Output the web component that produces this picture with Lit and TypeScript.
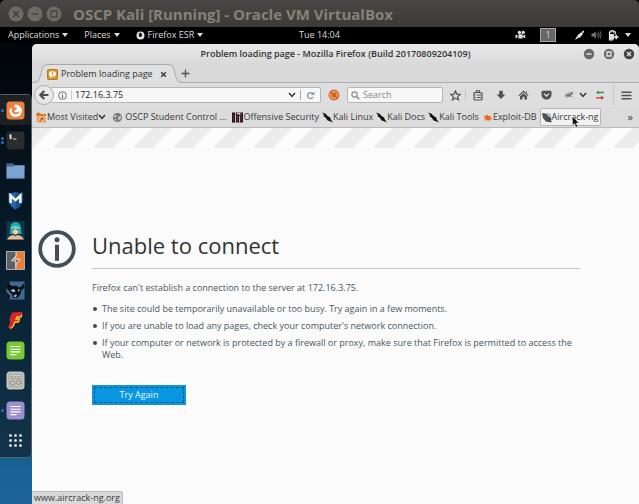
import { LitElement, html, css, svg } from "lit";
import { customElement } from "lit/decorators.js";

const caret = html`<svg class="caret" viewBox="0 0 6 4" width="6" height="4"><path d="M0 0H6L3 4Z" fill="currentColor" /></svg>`;
const chevron = html`<svg viewBox="0 0 8 6" width="8" height="6"><path d="M1 1L4 4.4L7 1" fill="none" stroke="#333" stroke-width="1.5" /></svg>`;

const folder = svg`<path d="M.5 .8H4L5 2H10V4H.5Z" fill="#d97321"/><path d="M.5 3.4H9L10 10.5H1Z" fill="#f19a4c"/><path d="M2.5 5L7 9M3 9L5 5L8 6.5" stroke="#fbe2c8" stroke-width="1"/>`;
const globe = svg`<circle cx="5.5" cy="5.5" r="4.5" fill="#777"/><path d="M2 3.4L5 3L4 5.2L2 5.4ZM6 5L9 3.5L8.6 7L6.5 8.6ZM2.5 7L4.5 7L5 9.2Z" fill="#cdcdcd"/>`;
const offsec = svg`<rect width="11" height="10" y=".5" fill="#201617"/><path d="M3.6 .5V10.5M7.6 4V10.5" stroke="#e6dcdc" stroke-width=".9"/><path d="M1.5 3V9M5.6 3V10M9.6 2V9" stroke="#8c3030" stroke-width=".8"/><path d="M5 .8H8.4V3H7L6.4 2H5Z" fill="#d7cccc"/>`;
const kali = svg`<path d="M0 .4L3.6 1.8L5.6 4L8.2 5.4L8.8 7.4L11 10.6L7.4 9L5.6 8.4L3.6 5.6L1.7 4.4L2 3Z" fill="#111"/>`;
const exploit = svg`<path d="M1 3L3 4.2L5 2.4L6.4 4L8.6 3.8L9 6L10.5 7.4L8.4 7.5L7.6 9L6.2 8.2L3 8.4L3.6 7L1.4 6.2L3 5.5Z" fill="#ef6a21"/>`;
const aircrack = svg`<path d="M0 1L5 2L9 6L9.4 10.5L4 9.6L1 6Z" fill="#3d4440"/><path d="M3 1L8 1.5L10 6.5L6.5 5Z" fill="#9eb0c6"/><path d="M1 2L8 9M1.5 4.5L6 9.5" stroke="#6c786f" stroke-width=".7"/>`;

const bookmarks = [
  { label: "OSCP Student Control …", icon: globe, cls: "spaced" },
  { label: "Offensive Security", icon: offsec, cls: "" },
  { label: "Kali Linux", icon: kali, cls: "" },
  { label: "Kali Docs", icon: kali, cls: "" },
  { label: "Kali Tools", icon: kali, cls: "" },
  { label: "Exploit-DB", icon: exploit, cls: "" },
];

const tile = (fill: string) => svg`<rect x=".5" y=".5" width="18" height="18" rx="3.5" fill=${fill}/>`;
const note = svg`<path d="M4.5 5.5H14.5M4.5 8.2H14.5M4.5 10.9H14.5M4.5 13.6H10.5" stroke="#fff" stroke-width="1.1"/>`;

const dock = [
  { name: "Firefox ESR", dots: 1, active: true, art: svg`${tile("#ee8040")}<circle cx="9.7" cy="9.8" r="6.2" fill="#fff"/><path d="M9.4 3.4C7 4.8 9 7.2 11.6 7.2C10.8 9.2 9 8.6 8.2 9.9C9.2 12 12 11.6 13.4 9.7C13.8 13 9.5 14.6 6.6 12C5.2 10.5 5.4 8 6.2 6.6C4.5 7 3.4 9 3.5 10.5V4L7 2.5Z" fill="#ee8040"/>` },
  { name: "Terminal", dots: 2, art: svg`${tile("#2b2c2d")}<path d="M5.5 4.2H3.8V5.7H5.3V7.3H3.4M4.6 3.2V8.2M7 8H10.5" fill="none" stroke="#eee" stroke-width=".9"/>` },
  { name: "Files", dots: 0, art: svg`<path d="M.5 2.2H7L8.5 4H18.5V9H.5Z" fill="#3f668f"/><path d="M.5 5.6H7.5L9 4.6H18.5V17.4H.5Z" fill="#7ba4d3"/><path d="M.5 17H18.5" stroke="#5b86b8"/>` },
  { name: "Metasploit", dots: 0, art: svg`<path d="M2.5 1.5Q6 2.8 9.5 1Q13 2.8 16.5 1.5V10Q15.5 15 9.5 18.5Q3.5 15 2.5 10Z" fill="#2869ad"/><path d="M9.5 1Q13 2.8 16.5 1.5V10Q15.5 15 9.5 18.5Z" fill="#1d508a"/><path d="M4.6 12V4.6L9.5 9.2L14.4 4.6V12" fill="none" stroke="#fff" stroke-width="2.4"/>` },
  { name: "Armitage", dots: 0, art: svg`<rect x=".5" y=".5" width="18" height="18" fill="#0e3a49"/><path d="M4 13L4.5 5Q6 1 9.5 1Q13 1 14.5 5L15.5 13Z" fill="#27a9a7"/><path d="M6.5 7H12.5L12 12L9.5 14L7 12Z" fill="#f2cba7"/><path d="M5 6.5Q9 3 14 6.5L14 8H5Z" fill="#67d7cd"/><path d="M1 18.5Q3 14.4 8 14L9.5 15.5L11 14Q16 14.4 18 18.5Z" fill="#e9bc96"/><path d="M6.5 8.5H8.5M10.5 8.5H12.5" stroke="#26505a"/>` },
  { name: "Burp Suite", dots: 0, art: svg`<rect x=".5" y=".5" width="18" height="18" fill="#5e6064"/><path d="M10 1H18V18H10V13.8L14 8.2H8.4L10 5Z" fill="#ed7c34"/><path d="M10 5L5 9.6H9.8V13.8Z" fill="#5e6064"/><path d="M10 1V5L5.6 9.8H9.8V18" fill="none" stroke="#eee" stroke-width="1"/><path d="M10 5L8.4 8.2H14L9.8 13.8" fill="none" stroke="#eee" stroke-width="1"/><rect x=".5" y=".5" width="18" height="18" fill="none" stroke="#c9c9c9" stroke-width=".8"/>` },
  { name: "Maltego", dots: 0, art: svg`<rect x=".5" y=".5" width="18" height="18" fill="#436b91"/><path d="M.5 .5H4L3 3L6 5L10 4.4L13 6.5L16 5L17.5 2L18.5 7L15.5 9L14.5 13L11.5 17H7L6.5 14L3 10L.5 7Z" fill="#0a1018"/><path d="M4.5 9.5L8 8L9.5 10.5L7 11ZM12 8L14 9L12.4 11ZM8 14.6L10 13.4L11 15L8.6 16.4Z" fill="#b4cddd"/><path d="M.5 11L4 15L3.4 18.5H.5Z" fill="#0a1018"/>` },
  { name: "Faraday", dots: 0, art: svg`<path d="M6 1.5L16.5 1L15 6L10.5 6.5L14 7.5L12.5 11L9 11.5L7.5 15L5 18L2 16.5L4 12L3.5 8Z" fill="#d9252b"/><path d="M16 3.5L15 6H11L10 8H13.5L12.5 11H8.8L7.3 15.2L4.5 17.5" fill="none" stroke="#f4cb3a" stroke-width="1.3"/>` },
  { name: "Leafpad", dots: 0, art: svg`${tile("#78c936")}${note}` },
  { name: "Tweak Tool", dots: 0, art: svg`${tile("#c8c8c0")}<rect x="3" y="3" width="13" height="13" fill="none" stroke="#9a9a94" stroke-width=".8"/><circle cx="6.8" cy="12" r="2.3" fill="none" stroke="#85857f"/><circle cx="12.6" cy="11.4" r="2.1" fill="none" stroke="#85857f"/><path d="M4.5 5.5H7M8.5 5.5H10.5M12 5.5H14.5M4.5 7.6H14.5" stroke="#999992"/>` },
  { name: "Notes", dots: 1, art: svg`${tile("#9c8fd0")}${note}` },
  { name: "Show Applications", dots: 0, art: svg`${[4.5, 9.5, 14.5].map((y) => [4.5, 9.5, 14.5].map((x) => svg`<rect x=${x - 1.3} y=${y - 1.3} width="2.6" height="2.6" rx=".8" fill="#edf1f3"/>`))}` },
];

@customElement("app-root")
export class AppRoot extends LitElement {
  static styles = css`
    :host {
      display: flex;
      flex-direction: column;
      min-height: 100vh;
      background: #000;
      font: 9px/14px "Open Sans", "Noto Sans", sans-serif;
      color: #3a3a3a;
    }
    * { box-sizing: border-box; }
    svg { display: block; flex: none; }
    button, input {
      font: inherit;
      color: inherit;
      border: 0;
      padding: 0;
      margin: 0;
      background: none;
      outline: none;
    }
    button { display: flex; align-items: center; justify-content: center; }
    a { color: inherit; text-decoration: none; }

    .host-bar {
      display: flex;
      align-items: center;
      height: 27px;
      padding: 0 8px;
      gap: 3px;
      border-radius: 5px 5px 0 0;
      background: linear-gradient(#484743, #3b3a36);
      color: #858277;
    }
    .host-title {
      margin-left: 8px;
      font-size: 15px;
      line-height: 24px;
      font-weight: 700;
      white-space: nowrap;
    }

    .panel {
      display: grid;
      grid-template-columns: 1fr auto 1fr;
      align-items: center;
      height: 16px;
      padding: 0 8px;
      background: #000;
      color: #dcdcdc;
    }
    .menus, .tray { display: flex; align-items: center; }
    .menus { gap: 16px; }
    .menus button { gap: 3px; }
    .tray { justify-content: flex-end; gap: 6px; }
    .workspace {
      width: 16px;
      height: 14px;
      margin: 0 12px 0 8px;
      border: 1px solid #a8a8a8;
      background: #666;
    }

    .desktop {
      flex: 1;
      display: grid;
      grid-template-columns: 32px minmax(0, 1fr);
      background: linear-gradient(#020509, #010a14 18%, #07293f 50%, #0e3f60 78%, #1a6396 92%, #1b6498);
      padding-top: 1px;
    }
    .dock {
      display: flex;
      flex-direction: column;
      align-self: start;
      margin-top: 50px;
      border: 1px solid #53616b;
      border-left: 0;
      border-radius: 0 5px 5px 0;
      background: linear-gradient(#060c12, #061b2a 40%, #12344b);
      padding-bottom: 2px;
    }
    .launcher {
      position: relative;
      width: 31px;
      height: 30px;
    }
    .launcher.active { background: #1c2125; border-radius: 3px; }
    .dots {
      position: absolute;
      left: 1px;
      top: 9px;
      height: 12px;
      display: flex;
      flex-direction: column;
      justify-content: center;
      gap: 1px;
    }
    .dot { width: 3px; height: 3px; border-radius: 50%; background: #2a6fc0; }

    .window {
      position: relative;
      display: flex;
      flex-direction: column;
      border-radius: 5px 5px 0 0;
      overflow: hidden;
      background: #d9d9d9;
    }
    .caption {
      display: grid;
      grid-template-columns: 1fr auto 1fr;
      align-items: center;
      height: 19px;
      padding: 0 4px;
      background: linear-gradient(#e9e9e9, #dadada);
      color: #333;
    }
    .caption-title { grid-column: 2; font-weight: 600; white-space: nowrap; }
    .controls { display: flex; justify-content: flex-end; gap: 8px; }

    .tabs {
      display: flex;
      align-items: flex-end;
      height: 20px;
      padding-left: 3px;
      background: linear-gradient(#d9d9d9 18px, #d6d6d6);
      box-shadow: inset 0 -1px #aaaeb2;
    }
    .tab { display: flex; color: #333; }
    .tab-body {
      display: flex;
      align-items: center;
      height: 19px;
      width: 122px;
      padding: 0 2px 0 0;
      border-top: 1px solid #a5a9ad;
      background: #e0e0e0;
    }
    .tab-title { flex: 1; padding-left: 3px; white-space: nowrap; }
    .new-tab { width: 9px; height: 19px; }

    .nav {
      display: flex;
      align-items: center;
      height: 24px;
      padding-left: 2px;
      background: #dedede;
    }
    .back {
      position: relative;
      z-index: 1;
      width: 20px;
      height: 20px;
      border: 1px solid #adadad;
      border-radius: 50%;
      background: #e8e8e8;
    }
    .field {
      display: flex;
      align-items: center;
      height: 16px;
      border: 1px solid #b5b5b5;
      border-radius: 2px;
      background: #f7f7f7;
    }
    .field input { flex: 1; min-width: 0; height: 14px; }
    .url { flex: 1; margin-left: -4px; padding: 0 1px 0 7px; gap: 4px; }
    .url input { height: 10px; border-left: 1px solid #cacaca; padding-left: 3px; color: #222; }
    .reload { width: 19px; height: 10px; border-left: 1px solid #aaa; }
    .stop { width: 26px; }
    .search { width: 96px; padding: 0 3px; gap: 3px; }
    .search input::placeholder { color: #888; opacity: 1; }
    .tool { width: 23px; height: 20px; }
    .tool.divided { height: 12px; padding-left: 3px; border-right: 1px solid #c5c5c5; }
    .tool.narrow { width: 21px; }
    .tool.slim { width: 8px; }
    .tool.wide { width: 26px; }
    .tool.menu { border-left: 1px solid #c5c5c5; }

    .bookmarks {
      display: flex;
      align-items: center;
      height: 21px;
      padding: 0 6px 0 4px;
      gap: 3px;
      border-bottom: 1px solid #b9b9b9;
      background: #dcdcdc;
      white-space: nowrap;
    }
    .bookmark { display: flex; align-items: center; }
    .bookmark.spaced { gap: 2px; margin: 0 3px; }
    .bookmark.hover {
      position: relative;
      height: 18px;
      padding: 0 1px;
      border: 1px solid #b4b4b4;
      border-radius: 2px;
      background: #f2f2f2;
    }
    .cursor { position: absolute; left: 31px; top: 7px; }
    .overflow { margin-left: auto; font-size: 11px; }

    .page { flex: 1; background: #fbfbfb; color: #4a5661; }
    .stripes {
      height: 20px;
      background: linear-gradient(135deg, #ececec 25%, #fcfcfc 25% 50%, #ececec 50% 75%, #fcfcfc 75%) 1px 0 / 40px 40px;
    }
    .error {
      display: flex;
      align-items: flex-start;
      gap: 16px;
      max-width: 554px;
      padding: 82px 6px 16px;
    }
    .message { flex: 1; }
    h1 {
      margin: 0 0 12px;
      padding-bottom: 8px;
      border-bottom: 1px solid #c8c8c8;
      color: #333;
      font-size: 22px;
      line-height: 30px;
      font-weight: 400;
    }
    p { margin: 0 0 7px; }
    ul { list-style: none; margin: 0 0 20px; padding: 0; }
    li { position: relative; padding: 1px 0 4px 10px; line-height: 12px; }
    li::before {
      content: "";
      position: absolute;
      left: 1px;
      top: 5px;
      width: 4px;
      height: 4px;
      border-radius: 50%;
      background: #3f4a55;
    }
    .retry {
      width: 94px;
      height: 20px;
      padding: 2px;
      background: #0996e0;
      color: #e8f6ff;
    }
    .retry span { flex: 1; height: 16px; line-height: 14px; border: 1px dashed #0b567e; }
    .status {
      position: absolute;
      left: 0;
      bottom: 0;
      padding: 0 2px;
      border: 1px solid #bbb;
      border-width: 1px 1px 0 0;
      border-radius: 0 3px 0 0;
      background: #d9d9d9;
      line-height: 12px;
    }
  `;

  render() {
    const hostButtons = ["M5 5L11 11M11 5L5 11", "M4.5 8H11.5", "M5 5H11V11H5Z"];
    const names = ["Close", "Minimize", "Maximize"];
    return html`
      <header class="host-bar">
        ${hostButtons.map((d, i) => html`<button aria-label=${names[i]}>
          <svg width="16" height="16" viewBox="0 0 16 16"><circle cx="8" cy="8" r="7.5" fill="#6d6b63" /><path d=${d} fill="none" stroke="#3a3935" stroke-width="1.1" /></svg>
        </button>`)}
        <span class="host-title">OSCP Kali [Running] - Oracle VM VirtualBox</span>
      </header>

      <nav class="panel">
        <div class="menus">
          <button>Applications ${caret}</button>
          <button>Places ${caret}</button>
          <button>
            <svg width="9" height="9" viewBox="0 0 9 9"><circle cx="4.5" cy="4.5" r="4" fill="#e0e0e0" /><path d="M4.2 1.4L6 3L5.8 5.4L4 6L2.8 5V3Z" fill="#080808" /></svg>
            Firefox ESR ${caret}
          </button>
        </div>
        <time>Tue 14:04</time>
        <div class="tray">
          <svg width="11" height="10" viewBox="0 0 11 10"><circle cx="4.4" cy="2.4" r="1.7" fill="#ddd" /><circle cx="8.2" cy="2.4" r="1.7" fill="#ddd" /><path d="M3.4 4.2H7.6V8.6H3.4ZM7.6 6L10.2 4.4V8.2L7.6 7ZM.5 4.5L2.6 5.6V7.2L.5 8.5Z" fill="#ddd" /></svg>
          <button class="workspace">1</button>
          <svg width="11" height="11" viewBox="0 0 11 11"><path d="M1 10L3 6L5 7.5ZM3.2 5.5L5.5 8L9 4L7.2 2.2ZM7.5 2L9.5 .5L10.2 1.3L9 3.5Z" fill="#e8e8e8" /></svg>
          <svg width="11" height="10" viewBox="0 0 11 10"><path d="M.5 3.5H2.5L4.8 1.5V8.5L2.5 6.5H.5Z" fill="#777" /><path d="M6 3.4Q7 5 6 6.6M7.4 2.2Q9.2 5 7.4 7.8M9 1Q11.4 5 9 9" fill="none" stroke="#666" /></svg>
          <svg width="11" height="11" viewBox="0 0 11 11"><path d="M1.5 1.8H3V.8H5.5V1.8H7.2V4.5M5 9.8H1.5V1.8" fill="none" stroke="#eee" stroke-width="1.2" /><path d="M2 4H6V9.5H2Z" fill="#ddd" /><path d="M5.8 7H10.5M8.2 4.8V9.2" stroke="#eee" stroke-width="1.4" /></svg>
          ${caret}
        </div>
      </nav>

      <main class="desktop">
        <aside class="dock">
          ${dock.map((d) => html`<button class="launcher ${d.active ? "active" : ""}" aria-label=${d.name}>
            <span class="dots">${Array.from({ length: d.dots }, () => html`<i class="dot"></i>`)}</span>
            <svg width="19" height="19" viewBox="0 0 19 19">${d.art}</svg>
          </button>`)}
        </aside>

        <section class="window">
          <div class="caption">
            <span class="caption-title">Problem loading page - Mozilla Firefox (Build 20170809204109)</span>
            <div class="controls">
              ${["M3.5 6H8.5", "M4 4H8V8H4Z", "M4 4L8 8M8 4L4 8"].map((d, i) => html`<button aria-label=${["Minimize window", "Restore window", "Close window"][i]}>
                <svg width="12" height="12" viewBox="0 0 12 12"><circle cx="6" cy="6" r="5.2" fill=${i === 2 ? "#444" : "#696969"} /><path d=${d} fill="none" stroke="#e5e5e5" stroke-width="1.3" /></svg>
              </button>`)}
            </div>
          </div>

          <div class="tabs">
            <div class="tab">
              <svg width="12" height="19" viewBox="0 0 12 19"><path d="M0 18.5C8 18.5 4 .5 12 .5V19H0Z" fill="#e0e0e0" /><path d="M0 18.5C8 18.5 4 .5 12 .5" fill="none" stroke="#a5a9ad" /></svg>
              <div class="tab-body">
                <svg width="11" height="11" viewBox="0 0 11 11"><rect x=".5" y=".5" width="10" height="10" rx="1" fill="#dc9827" stroke="#b9791b" /><ellipse cx="5.5" cy="5" rx="3.5" ry="2.8" fill="#fff" /><path d="M3 6.5L3 9L5.5 7.5Z" fill="#fff" /><path d="M5.5 3V5.4M5.5 6.1V7" stroke="#d38d20" stroke-width="1.1" /></svg>
                <span class="tab-title">Problem loading page</span>
                <button aria-label="Close tab"><svg width="7" height="7" viewBox="0 0 7 7"><path d="M1.2 1.2L5.8 5.8M5.8 1.2L1.2 5.8" stroke="#444" stroke-width="1.6" /></svg></button>
              </div>
              <svg width="12" height="19" viewBox="0 0 12 19"><path d="M12 18.5C4 18.5 8 .5 0 .5V19H12Z" fill="#e0e0e0" /><path d="M12 18.5C4 18.5 8 .5 0 .5" fill="none" stroke="#a5a9ad" /></svg>
            </div>
            <button class="new-tab" aria-label="New tab"><svg width="9" height="9" viewBox="0 0 9 9"><path d="M4.5 .5V8.5M.5 4.5H8.5" stroke="#555" stroke-width="1.3" /></svg></button>
          </div>

          <div class="nav">
            <button class="back" aria-label="Back"><svg width="12" height="12" viewBox="0 0 12 12"><path d="M6.2 2L2.4 6L6.2 10M2.8 6H10.4" fill="none" stroke="#4a4a4a" stroke-width="2.2" /></svg></button>
            <div class="field url">
              <svg width="9" height="9" viewBox="0 0 9 9"><circle cx="4.5" cy="4.5" r="3.9" fill="none" stroke="#666" stroke-width=".9" /><path d="M4.5 4V7M4.5 2V3.1" stroke="#666" stroke-width="1.1" /></svg>
              <input aria-label="Address" value="172.16.3.75" />
              ${chevron}
              <button class="reload" aria-label="Reload"><svg width="9" height="9" viewBox="0 0 9 9"><path d="M6.8 2.6A3 3 0 1 0 7 6.2" fill="none" stroke="#8194a5" stroke-width="1.3" /><path d="M8.3 .6V4H4.8Z" fill="#8194a5" /></svg></button>
            </div>
            <button class="stop" aria-label="NoScript"><svg width="12" height="12" viewBox="0 0 12 12"><circle cx="6" cy="6" r="4.8" fill="#e9b14a" stroke="#e2503f" stroke-width="1.2" /><path d="M3.5 3.5L5 4L7.5 3L9 4.5L8 8L5 9L3.5 7Z" fill="#c8731d" /><path d="M2.6 2.6L9.4 9.4" stroke="#dd4232" stroke-width="1.2" /></svg></button>
            <label class="field search">
              <svg width="9" height="9" viewBox="0 0 9 9"><circle cx="3.5" cy="3.5" r="2.6" fill="none" stroke="#888" stroke-width="1.1" /><path d="M5.4 5.4L8.2 8.2" stroke="#888" stroke-width="1.4" /></svg>
              <input aria-label="Search" placeholder="Search" />
            </label>
            <button class="tool divided" aria-label="Bookmark this page"><svg width="11" height="11" viewBox="0 0 11 11"><path d="M5.5 1L6.9 4.1L10.2 4.4L7.7 6.6L8.5 9.9L5.5 8.1L2.5 9.9L3.3 6.6L.8 4.4L4.1 4.1Z" fill="none" stroke="#505050" stroke-width="1.2" /></svg></button>
            <button class="tool" aria-label="Library"><svg width="10" height="11" viewBox="0 0 10 11"><rect x="1" y="2.5" width="8" height="7.5" rx="1" fill="none" stroke="#505050" stroke-width="1.2" /><path d="M3.5 2V.8H6.5V2M2.5 5H3.5M4.3 5H8M2.5 7.5H3.5M4.3 7.5H8" fill="none" stroke="#505050" stroke-width="1.1" /></svg></button>
            <button class="tool" aria-label="Downloads"><svg width="10" height="10" viewBox="0 0 10 10"><path d="M3.2 .8H6.8V4.4H9.4L5 9L.6 4.4H3.2Z" fill="#505050" /></svg></button>
            <button class="tool" aria-label="Home"><svg width="11" height="10" viewBox="0 0 11 10"><path d="M5.5 .5L10.6 5.4L9.8 6.1L5.5 2.2L1.2 6.1L.4 5.4Z" fill="#505050" /><path d="M5.5 3.2L9 6.3V9.5H6.5V6.8H4.5V9.5H2V6.3Z" fill="#505050" /><path d="M8 1.2H9V3.2L8 2.4Z" fill="#505050" /></svg></button>
            <button class="tool" aria-label="Pocket"><svg width="11" height="10" viewBox="0 0 11 10"><path d="M1.5 .8H9.5Q10.5 .8 10.5 2V4.4C10.5 7.5 8 9.4 5.5 9.4C3 9.4 .5 7.5 .5 4.4V2Q.5 .8 1.5 .8Z" fill="#505050" /><path d="M3 3.6L5.5 6L8 3.6" fill="none" stroke="#e5e5e5" stroke-width="1.3" /></svg></button>
            <button class="tool narrow" aria-label="Firebug"><svg width="10" height="8" viewBox="0 0 10 8"><ellipse cx="4.5" cy="4.3" rx="2.5" ry="1.8" fill="#777" /><circle cx="7.4" cy="2.5" r="1.2" fill="#666" /><path d="M1 2.5L3.5 4M.5 5L3 5M2 7L4 5M5 2L4.5 .8M7 5L9 6.5M8 2L9.6 1.2" stroke="#888" stroke-width=".7" /></svg></button>
            <button class="tool slim" aria-label="Firebug menu">${chevron}</button>
            <button class="tool wide" aria-label="Proxy"><svg width="10" height="10" viewBox="0 0 10 10"><path d="M9 2.5H3" stroke="#25a436" stroke-width="1.3" /><path d="M4 .5V4.5L.8 2.5Z" fill="#25a436" /><path d="M1 7.8H6.5" stroke="#e22b2b" stroke-width="1.3" /><path d="M6 5.8V9.8L9.2 7.8Z" fill="#e22b2b" /></svg></button>
            <button class="tool menu wide" aria-label="Menu"><svg width="11" height="9" viewBox="0 0 11 9"><path d="M.5 1.2H10.5M.5 4.5H10.5M.5 7.8H10.5" stroke="#505050" stroke-width="1.6" /></svg></button>
          </div>

          <nav class="bookmarks">
            <button class="bookmark"><svg width="11" height="11" viewBox="0 0 11 11">${folder}</svg>Most Visited${chevron}</button>
            ${bookmarks.map((b) => html`<a class="bookmark ${b.cls}" href="#"><svg width="11" height="11" viewBox="0 0 11 11">${b.icon}</svg>${b.label}</a>`)}
            <a class="bookmark hover" href="#"><svg width="10" height="11" viewBox="0 0 10 11">${aircrack}</svg>Aircrack-ng
              <svg class="cursor" width="8" height="12" viewBox="0 0 8 12"><path d="M.5 .5V9.2L2.5 7.5L4 11.3L5.6 10.6L4.2 7H7Z" fill="#111" stroke="#eee" stroke-width=".5" /></svg>
            </a>
            <button class="overflow" aria-label="More bookmarks">»</button>
          </nav>

          <article class="page">
            <div class="stripes"></div>
            <div class="error">
              <svg width="38" height="38" viewBox="0 0 38 38"><circle cx="19" cy="19" r="16.8" fill="none" stroke="#424f5a" stroke-width="3.8" /><circle cx="19" cy="9.7" r="2.5" fill="#424f5a" /><path d="M19 14.8V30.8" stroke="#424f5a" stroke-width="4" /></svg>
              <div class="message">
                <h1>Unable to connect</h1>
                <p>Firefox can't establish a connection to the server at 172.16.3.75.</p>
                <ul>
                  <li>The site could be temporarily unavailable or too busy. Try again in a few moments.</li>
                  <li>If you are unable to load any pages, check your computer's network connection.</li>
                  <li>If your computer or network is protected by a firewall or proxy, make sure that Firefox is permitted to access the Web.</li>
                </ul>
                <button class="retry"><span>Try Again</span></button>
              </div>
            </div>
          </article>
          <div class="status">www.aircrack-ng.org</div>
        </section>
      </main>
    `;
  }
}
